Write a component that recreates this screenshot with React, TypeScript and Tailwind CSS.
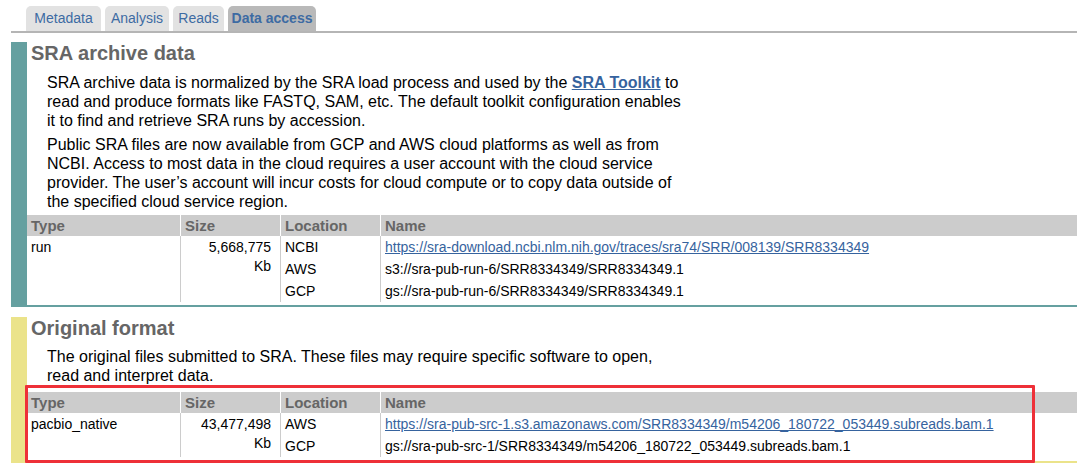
const tabs = [
  { label: "Metadata", w: "w-[75px]" },
  { label: "Analysis", w: "w-[64px]" },
  { label: "Reads", w: "w-[51px]" },
];

type Loc = { where: string; name: string; link?: boolean };

function FileTable({
  type,
  size,
  locs,
}: {
  type: string;
  size: string;
  locs: Loc[];
}) {
  return (
    <div className="text-[14px] text-black">
      <div className="grid grid-cols-[154px_100px_100px_1fr] h-[21px] bg-[#cccccc] text-[15px] font-bold text-[#666666] leading-[21px]">
        <div className="pl-1 border-r border-white">Type</div>
        <div className="pl-1 border-r border-white">Size</div>
        <div className="pl-1 border-r border-white">Location</div>
        <div className="pl-1">Name</div>
      </div>
      <div className="grid grid-cols-[154px_100px_100px_1fr] leading-[22px]">
        <div className="pl-1 border-r border-[#cccccc]">{type}</div>
        <div className="pr-[9px] text-right border-r border-[#cccccc] leading-[19px] pt-[2px]">
          {size}
          <br />
          Kb
        </div>
        <div className="pl-1 border-r border-[#cccccc]">
          {locs.map((l) => (
            <div key={l.where} className="h-[22px]">
              {l.where}
            </div>
          ))}
        </div>
        <div className="pl-1">
          {locs.map((l) => (
            <div key={l.where} className="h-[22px]">
              {l.link ? (
                <a href="#" className="text-[#36639e] underline">
                  {l.name}
                </a>
              ) : (
                l.name
              )}
            </div>
          ))}
        </div>
      </div>
    </div>
  );
}

export default function App() {
  return (
    <div className="w-[1077px] h-[470px] overflow-hidden bg-white pl-[11px] font-['Liberation_Sans',Arial,sans-serif]">
      <div className="flex items-end gap-[4px] pl-[15px] pt-[6px] border-b-2 border-[#b5b5b5]">
        {tabs.map((t) => (
          <div
            key={t.label}
            className={`${t.w} h-[25px] rounded-t-[5px] bg-[#e2e2e2] text-center text-[14px] leading-[25px] text-[#3d6ba3]`}
          >
            {t.label}
          </div>
        ))}
        <div className="w-[88px] h-[25px] rounded-t-[5px] bg-[#b9b9b9] text-center text-[14px] leading-[25px] font-bold text-[#3d6ba3]">
          Data access
        </div>
      </div>

      <section className="mt-[9px] border-l-[16px] border-b-2 border-[#65a0a0] pb-[3px]">
        <h2 className="pl-1 text-[20px] leading-[22px] font-bold text-[#666666]">
          SRA archive data
        </h2>
        <div className="pl-5 w-[660px] text-[16px] leading-[19px] text-black">
          <p className="mt-[9px]">
            SRA archive data is normalized by the SRA load process and used by
            the{" "}
            <a href="#" className="font-bold text-[#36639e] underline">
              SRA Toolkit
            </a>{" "}
            to read and produce formats like FASTQ, SAM, etc. The default
            toolkit configuration enables it to find and retrieve SRA runs by
            accession.
          </p>
          <p className="mt-[5px]">
            Public SRA files are now available from GCP and AWS cloud
            platforms as well as from NCBI. Access to most data in the cloud
            requires a user account with the cloud service provider. The
            user’s account will incur costs for cloud compute or to copy data
            outside of the specified cloud service region.
          </p>
        </div>
        <div className="mt-[4px]">
          <FileTable
            type="run"
            size="5,668,775"
            locs={[
              {
                where: "NCBI",
                name: "https://sra-download.ncbi.nlm.nih.gov/traces/sra74/SRR/008139/SRR8334349",
                link: true,
              },
              { where: "AWS", name: "s3://sra-pub-run-6/SRR8334349/SRR8334349.1" },
              { where: "GCP", name: "gs://sra-pub-run-6/SRR8334349/SRR8334349.1" },
            ]}
          />
        </div>
      </section>

      <section className="relative mt-[10px] border-l-[16px] border-b-2 border-[#ebe38a] pb-[4px]">
        <h2 className="pl-1 text-[20px] leading-[22px] font-bold text-[#666666]">
          Original format
        </h2>
        <div className="pl-5 w-[660px] text-[16px] leading-[19px] text-black">
          <p className="mt-[8px]">
            The original files submitted to SRA. These files may require
            specific software to open, read and interpret data.
          </p>
        </div>
        <div className="mt-[7px]">
          <FileTable
            type="pacbio_native"
            size="43,477,498"
            locs={[
              {
                where: "AWS",
                name: "https://sra-pub-src-1.s3.amazonaws.com/SRR8334349/m54206_180722_053449.subreads.bam.1",
                link: true,
              },
              {
                where: "GCP",
                name: "gs://sra-pub-src-1/SRR8334349/m54206_180722_053449.subreads.bam.1",
              },
            ]}
          />
        </div>
        <div className="absolute left-[-2px] top-[68px] w-[1010px] h-[78px] border-[3px] border-[#ee3038] rounded-[1px]" />
      </section>
    </div>
  );
}
